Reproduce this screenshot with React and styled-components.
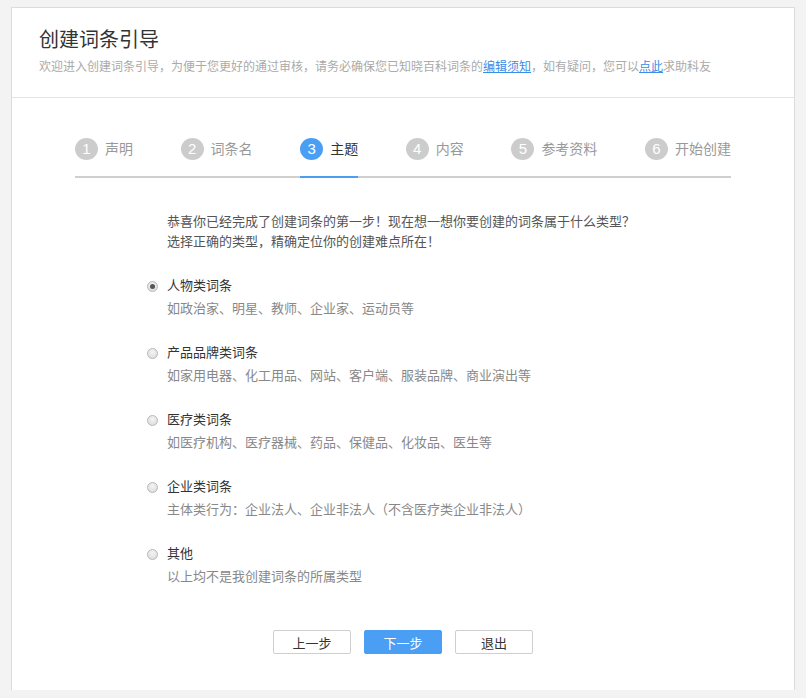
import React from "react";
import styled, { createGlobalStyle } from "styled-components";

const Global = createGlobalStyle`
  html, body { margin: 0; padding: 0; background: #f3f3f3; }
  body {
    font-family: "Liberation Sans", "Noto Sans CJK SC", sans-serif;
    color: #333;
  }
`;

const Page = styled.div`
  padding: 7px 11px 8px 11px;
`;

const Card = styled.div`
  background: #fff;
  border: 1px solid #dcdcdc;
  border-bottom: none;
  height: 683px;
  box-sizing: border-box;
`;

const Header = styled.div`
  padding: 18px 27px 21px;
  border-bottom: 1px solid #e3e3e3;
`;

const Title = styled.h1`
  margin: 0;
  font-size: 20px;
  line-height: 28px;
  font-weight: normal;
  color: #333;
`;

const Sub = styled.p`
  margin: 4px 0 0;
  font-size: 12px;
  line-height: 18px;
  color: #aaa;
`;

const Link = styled.a`
  color: #3a8ee6;
  text-decoration: underline;
`;

const Steps = styled.div`
  display: flex;
  justify-content: space-between;
  margin: 40px 63px 0;
  border-bottom: 2px solid #cfcfcf;
`;

const Step = styled.div`
  display: flex;
  align-items: flex-start;
  gap: 7px;
  padding-bottom: 16px;
  margin-bottom: -2px;
  border-bottom: 2px solid ${p => (p.$active ? "#4a9ff5" : "transparent")};
`;

const Num = styled.span`
  width: 23px;
  height: 22px;
  border-radius: 50%;
  background: ${p => (p.$active ? "#4a9ff5" : "#cccccc")};
  color: #fff;
  font-size: 15px;
  line-height: 22px;
  text-align: center;
`;

const StepLabel = styled.span`
  font-size: 14px;
  line-height: 22px;
  color: ${p => (p.$active ? "#333" : "#999")};
`;

const Content = styled.div`
  margin: 34px 0 0 135px;
`;

const Intro = styled.p`
  margin: 0 0 24px 20px;
  font-size: 13px;
  line-height: 20px;
  color: #555;
`;

const Option = styled.label`
  display: grid;
  grid-template-columns: 11px 1fr;
  column-gap: 9px;
  margin-bottom: 24px;
  cursor: pointer;
`;

const Radio = styled.span`
  width: 11px;
  height: 11px;
  margin-top: 5px;
  box-sizing: border-box;
  border-radius: 50%;
  border: 1px solid #b8b8b8;
  background: radial-gradient(circle at 50% 35%, #f4f4f4 0%, #d8d8d8 100%);
  display: flex;
  align-items: center;
  justify-content: center;
  &::after {
    content: "";
    width: 5px;
    height: 5px;
    border-radius: 50%;
    background: ${p => (p.$checked ? "#555" : "transparent")};
  }
`;

const OptTitle = styled.div`
  font-size: 13px;
  line-height: 20px;
  color: #333;
`;

const OptDesc = styled.div`
  grid-column: 2;
  margin-top: 3px;
  font-size: 13px;
  line-height: 20px;
  color: #888;
`;

const Buttons = styled.div`
  display: flex;
  justify-content: center;
  gap: 13px;
  margin-top: 43px;
`;

const Button = styled.button`
  width: 78px;
  height: 24px;
  border-radius: 2px;
  border: 1px solid ${p => (p.$primary ? "#4a9ff5" : "#cfcfcf")};
  background: ${p => (p.$primary ? "#4a9ff5" : "#fff")};
  color: ${p => (p.$primary ? "#fff" : "#333")};
  font-family: "Liberation Sans", "Noto Sans CJK SC", sans-serif;
  font-size: 13px;
  padding: 0;
  cursor: pointer;
`;

const steps = ["声明", "词条名", "主题", "内容", "参考资料", "开始创建"];
const options = [
  ["人物类词条", "如政治家、明星、教师、企业家、运动员等"],
  ["产品品牌类词条", "如家用电器、化工用品、网站、客户端、服装品牌、商业演出等"],
  ["医疗类词条", "如医疗机构、医疗器械、药品、保健品、化妆品、医生等"],
  ["企业类词条", "主体类行为：企业法人、企业非法人（不含医疗类企业非法人）"],
  ["其他", "以上均不是我创建词条的所属类型"],
];

export default function App() {
  return (
    <Page>
      <Global />
      <Card>
        <Header>
          <Title>创建词条引导</Title>
          <Sub>
            欢迎进入创建词条引导，为便于您更好的通过审核，请务必确保您已知晓百科词条的
            <Link href="#">编辑须知</Link>，如有疑问，您可以<Link href="#">点此</Link>求助科友
          </Sub>
        </Header>
        <Steps>
          {steps.map((s, i) => (
            <Step key={s} $active={i === 2}>
              <Num $active={i === 2}>{i + 1}</Num>
              <StepLabel $active={i === 2}>{s}</StepLabel>
            </Step>
          ))}
        </Steps>
        <Content>
          <Intro>
            恭喜你已经完成了创建词条的第一步！现在想一想你要创建的词条属于什么类型？
            <br />
            选择正确的类型，精确定位你的创建难点所在！
          </Intro>
          {options.map(([t, d], i) => (
            <Option key={t}>
              <Radio $checked={i === 0} />
              <OptTitle>{t}</OptTitle>
              <OptDesc>{d}</OptDesc>
            </Option>
          ))}
        </Content>
        <Buttons>
          <Button>上一步</Button>
          <Button $primary>下一步</Button>
          <Button>退出</Button>
        </Buttons>
      </Card>
    </Page>
  );
}
